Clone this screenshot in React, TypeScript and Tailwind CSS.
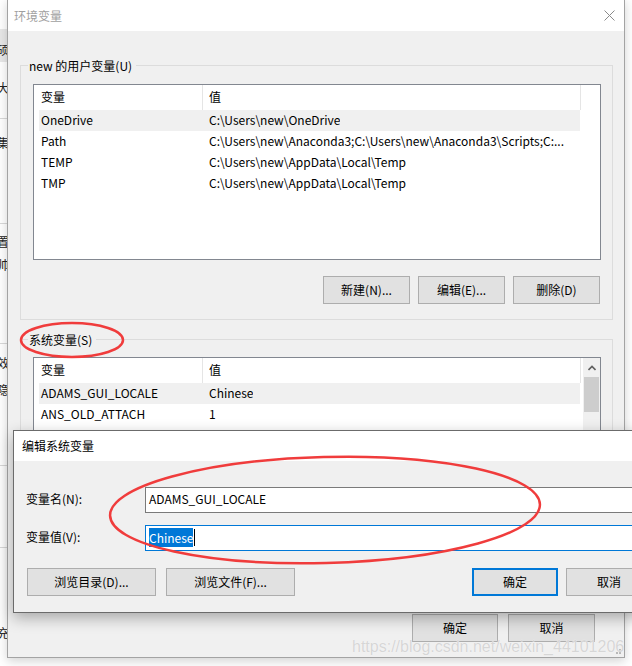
import React from "react";

const ui = "font-['Noto_Sans_CJK_SC',sans-serif] text-[12px] text-black";

type Row = [string, string];

const userVars: Row[] = [
  ["OneDrive", "C:\\Users\\new\\OneDrive"],
  ["Path", "C:\\Users\\new\\Anaconda3;C:\\Users\\new\\Anaconda3\\Scripts;C:..."],
  ["TEMP", "C:\\Users\\new\\AppData\\Local\\Temp"],
  ["TMP", "C:\\Users\\new\\AppData\\Local\\Temp"],
];

const sysVars: Row[] = [
  ["ADAMS_GUI_LOCALE", "Chinese"],
  ["ANS_OLD_ATTACH", "1"],
];

function Btn({ label, className = "" }: { label: string; className?: string }) {
  return (
    <div
      className={`flex h-[28px] shrink-0 items-center justify-center border border-[#adadad] bg-[#e1e1e1] pb-[1px] ${className}`}
    >
      {label}
    </div>
  );
}

function VarList({ rows, height, scroll }: { rows: Row[]; height: string; scroll?: boolean }) {
  return (
    <div className={`flex w-[568px] overflow-hidden border border-[#828790] bg-white ${height}`}>
      <div className="flex w-[548px] flex-col">
        <div className="flex h-[25px] leading-[24px]">
          <div className="w-[169px] border-r border-[#e5e5e5] pl-[7px]">变量</div>
          <div className="w-[378px] border-r border-[#e5e5e5] pl-[6px]">值</div>
        </div>
        {rows.map((r, i) => (
          <div
            key={r[0]}
            className={`ml-[5px] flex h-[21px] w-[541px] leading-[20px] ${i === 0 ? "bg-[#f0f0f0]" : ""}`}
          >
            <div className="w-[164px] shrink-0 pl-[2px]">{r[0]}</div>
            <div className="overflow-hidden whitespace-nowrap pl-[6px]">{r[1]}</div>
          </div>
        ))}
      </div>
      {scroll && (
        <div className="ml-auto flex w-[17px] flex-col bg-[#f0f0f0]">
          <div className="flex h-[19px] items-center justify-center">
            <svg width="8" height="6" viewBox="0 0 8 6">
              <path d="M0.5 5 L4 1.5 L7.5 5" fill="none" stroke="#606060" strokeWidth="1.6" />
            </svg>
          </div>
          <div className="mx-[1px] h-[35px] bg-[#cdcdcd]" />
        </div>
      )}
      {!scroll && <div className="flex-1" />}
    </div>
  );
}

function BackStrip() {
  const ch = "ml-[-3px] leading-[17px] text-[#222]";
  return (
    <div className={`absolute left-0 top-0 flex h-[666px] w-[7px] flex-col overflow-hidden bg-white ${ui}`}>
      <div className="h-[29px] shrink-0" />
      <div className="h-[33px] shrink-0 bg-[#e8e8e8] pt-[12px]">
        <div className={ch}>硕</div>
      </div>
      <div className="h-[56px] shrink-0 pt-[17px]">
        <div className={ch}>大</div>
      </div>
      <div className="h-[105px] shrink-0 border-t border-[#d9d9d9] pt-[15px]">
        <div className={ch}>集</div>
      </div>
      <div className="h-[120px] shrink-0 border-t border-[#d9d9d9] pt-[9px]">
        <div className={ch}>置</div>
        <div className={`mt-[6px] ${ch}`}>帅</div>
      </div>
      <div className="h-[122px] shrink-0 border-t border-[#d9d9d9] pt-[10px]">
        <div className={ch}>效</div>
        <div className={`mt-[10px] ${ch}`}>隐</div>
      </div>
      <div className="h-[82px] shrink-0 border-t border-[#d9d9d9]" />
      <div className="flex-1 border-t border-[#d9d9d9] pt-[76px]">
        <div className={ch}>充</div>
      </div>
    </div>
  );
}

function EnvDialog() {
  return (
    <div
      className={`absolute left-[7px] top-[-1px] flex h-[659px] w-[618px] flex-col border border-[#a3a3a3] bg-[#f0f0f0] shadow-[0_3px_10px_rgba(0,0,0,0.18)] ${ui}`}
    >
      <div className="flex h-[31px] shrink-0 items-center justify-between bg-white pl-[6px] pr-[9px]">
        <span className="text-[#9f9f9f]">环境变量</span>
        <svg width="11" height="11" viewBox="0 0 11 11">
          <path d="M0.5 0.5 L10.5 10.5 M10.5 0.5 L0.5 10.5" stroke="#8a8a8a" strokeWidth="1" fill="none" />
        </svg>
      </div>

      <fieldset className="ml-[12px] mt-[26px] w-[593px] border border-[#dcdcdc] pb-[15px]">
        <legend className="ml-[7px] pl-[1px] pr-[4px] leading-[17px]">new 的用户变量(U)</legend>
        <div className="pl-[12px] pt-[10px]">
          <VarList rows={userVars} height="h-[176px]" />
          <div className="mt-[16px] flex w-[567px] justify-end gap-[8px]">
            <Btn label="新建(N)..." className="w-[87px]" />
            <Btn label="编辑(E)..." className="w-[87px]" />
            <Btn label="删除(D)" className="w-[87px]" />
          </div>
        </div>
      </fieldset>

      <fieldset className="ml-[12px] mt-[11px] w-[593px] border border-[#dcdcdc] pb-[15px]">
        <legend className="ml-[7px] pl-[1px] pr-[4px] leading-[17px]">系统变量(S)</legend>
        <div className="pl-[12px] pt-[9px]">
          <VarList rows={sysVars} height="h-[170px]" scroll />
          <div className="mt-[16px] flex w-[567px] justify-end gap-[8px]">
            <Btn label="新建(W)..." className="w-[87px]" />
            <Btn label="编辑(I)..." className="w-[87px]" />
            <Btn label="删除(L)" className="w-[87px]" />
          </div>
        </div>
      </fieldset>

      <div className="mt-auto flex justify-end gap-[10px] pb-[15px] pr-[29px]">
        <Btn label="确定" className="w-[86px]" />
        <Btn label="取消" className="w-[87px]" />
      </div>

      <div className="absolute bottom-[3px] right-[3px] grid grid-cols-3 gap-[1px]">
        <span />
        <span />
        <span className="h-[2px] w-[2px] bg-[#b8b8b8]" />
        <span />
        <span className="h-[2px] w-[2px] bg-[#b8b8b8]" />
        <span className="h-[2px] w-[2px] bg-[#b8b8b8]" />
      </div>
    </div>
  );
}

function EditDialog() {
  return (
    <div
      className={`absolute left-[13px] top-[430px] flex h-[183px] w-[640px] flex-col border border-[#6b6b6b] bg-[#f0f0f0] shadow-[0_5px_14px_rgba(0,0,0,0.3)] ${ui}`}
    >
      <div className="flex h-[30px] shrink-0 items-center bg-white pl-[8px]">编辑系统变量</div>

      <div className="mt-[26px] flex items-center pl-[12px]">
        <div className="w-[119px] shrink-0 pb-[2px]">变量名(N):</div>
        <div className="h-[26px] flex-1 border border-[#7a7a7a] bg-white pl-[3px] leading-[22px]">
          ADAMS_GUI_LOCALE
        </div>
      </div>

      <div className="mt-[12px] flex items-center pl-[12px]">
        <div className="w-[119px] shrink-0 pb-[2px]">变量值(V):</div>
        <div className="flex h-[26px] flex-1 items-center border border-[#0078d7] bg-white pl-[3px] pb-[1px]">
          <span className="inline-block bg-[#0078d7] leading-[19px] text-white">Chinese</span>
          <span className="ml-[1px] inline-block h-[17px] w-[1px] bg-black" />
        </div>
      </div>

      <div className="mt-[17px] flex pl-[13px]">
        <Btn label="浏览目录(D)..." className="w-[129px]" />
        <Btn label="浏览文件(F)..." className="ml-[10px] w-[129px]" />
        <div className="ml-[177px] flex h-[28px] w-[86px] shrink-0 items-center justify-center border-2 border-[#0078d7] bg-[#e1e1e1] pb-[1px]">
          确定
        </div>
        <Btn label="取消" className="ml-[8px] w-[86px]" />
      </div>
    </div>
  );
}

export default function App() {
  return (
    <div className="relative h-[666px] w-[632px] overflow-hidden bg-white">
      <BackStrip />
      <EnvDialog />
      <EditDialog />

      <div className="pointer-events-none absolute left-[352px] top-[638px] font-['Liberation_Sans',Arial,sans-serif] text-[16px] leading-[18px] text-[#d6d6d6] [text-shadow:0_0_1px_#ffffff]">
        https://blog.csdn.net/weixin_44101206
      </div>

      <svg className="pointer-events-none absolute left-0 top-0" width="632" height="666" viewBox="0 0 632 666">
        <ellipse cx="72" cy="340" rx="51" ry="17" fill="none" stroke="#f03c3c" strokeWidth="2.5" />
        <ellipse
          cx="325"
          cy="510"
          rx="215"
          ry="53"
          fill="none"
          stroke="#f03c3c"
          strokeWidth="2.5"
          transform="rotate(-1.5 325 510)"
        />
      </svg>
    </div>
  );
}
